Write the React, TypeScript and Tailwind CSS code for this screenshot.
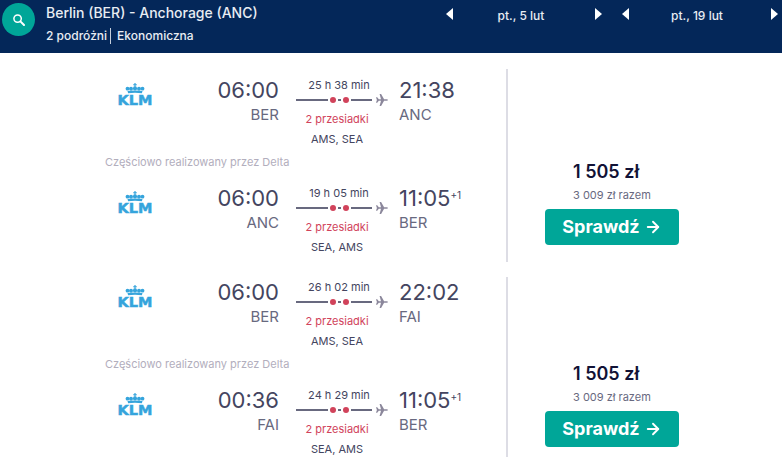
import { ArrowRight } from "lucide-react";

type Leg = {
  departTime: string;
  from: string;
  duration: string;
  via: string;
  arriveTime: string;
  to: string;
  nextDay?: boolean;
};

type Offer = {
  id: number;
  outbound: Leg;
  inbound: Leg;
};

const offers: Offer[] = [
  {
    id: 1,
    outbound: { departTime: "06:00", from: "BER", duration: "25 h 38 min", via: "AMS, SEA", arriveTime: "21:38", to: "ANC" },
    inbound: { departTime: "06:00", from: "ANC", duration: "19 h 05 min", via: "SEA, AMS", arriveTime: "11:05", to: "BER", nextDay: true },
  },
  {
    id: 2,
    outbound: { departTime: "06:00", from: "BER", duration: "26 h 02 min", via: "AMS, SEA", arriveTime: "22:02", to: "FAI" },
    inbound: { departTime: "00:36", from: "FAI", duration: "24 h 29 min", via: "SEA, AMS", arriveTime: "11:05", to: "BER", nextDay: true },
  },
];

const KlmLogo = () => (
  <svg viewBox="0 0 38 24" className="h-6 w-[38px] shrink-0 fill-[#35a4dc]" role="img" aria-label="KLM">
    <path d="M18.4 0h1.2v1.2h1.2v1.1h-1.2v1.5h-1.2V2.3h-1.2V1.2h1.2z" />
    <circle cx="19" cy="5.4" r="2.1" />
    <circle cx="15" cy="5.7" r="2" />
    <circle cx="23" cy="5.7" r="2" />
    <circle cx="11.5" cy="5.7" r="1.9" />
    <circle cx="26.5" cy="5.7" r="1.9" />
    <path d="M11.500 8.100q7.500-1.200 15 0l-.6 2.100q-6.900-1.100-13.800 0z" />
    <text x="19" y="22" textAnchor="middle" fontFamily="DejaVu Sans, sans-serif" fontWeight="700" fontSize="14.500" stroke="#35a4dc" strokeWidth="0.500">
      KLM
    </text>
  </svg>
);

const PlaneIcon = () => (
  <svg viewBox="0 0 12 12" className="size-3 shrink-0 fill-[#8b879b]" aria-hidden="true">
    <path d="M0 3.300h1.200L2.800 5.200H5L3.600 0h1.500l3 5.200h2.500Q12 5.300 12 6t-1.400.8H8.100l-3 5.200H3.600L5 6.800H2.800L1.200 8.700H0L.9 6z" />
  </svg>
);

const StopsLine = () => (
  <div className="flex h-3 items-center gap-0.5">
    <span className="h-0.5 flex-1 bg-[#68697f]" />
    <span className="size-1.5 rounded-full bg-[#d1435b]" />
    <span className="h-0.5 w-[3px] bg-[#68697f]" />
    <span className="size-1.5 rounded-full bg-[#d1435b]" />
    <span className="mr-0.5 h-0.5 w-[21px] bg-[#68697f]" />
    <PlaneIcon />
  </div>
);

const LegRow = ({ leg }: { leg: Leg }) => (
  <div className="flex items-start">
    <div className="pt-1.5 pl-[11px]">
      <KlmLogo />
    </div>
    <div className="flex-1 text-right">
      <p className="pb-0.5 text-[22px] leading-[26px]">{leg.departTime}</p>
      <p className="text-[15px] leading-5 text-[#68697f]">{leg.from}</p>
    </div>
    <div className="ml-[17px] w-[92px]">
      <p className="pr-1.5 text-center text-[11px] leading-[17px]">{leg.duration}</p>
      <StopsLine />
      <div className="pt-[3px] pr-2.5 text-center text-[11px]">
        <p className="leading-5 text-[#d1435b]">2 przesiadki</p>
        <p className="pt-0.5 leading-4">{leg.via}</p>
      </div>
    </div>
    <div className="w-[118px] pl-[11px]">
      <p className="flex items-start pb-0.5 text-[22px] leading-[26px]">
        {leg.arriveTime}
        {leg.nextDay && <sup className="top-0 text-[10px] leading-5">+1</sup>}
      </p>
      <p className="text-[15px] leading-5 text-[#68697f]">{leg.to}</p>
    </div>
  </div>
);

const OfferCard = ({ offer }: { offer: Offer }) => (
  <article className="group flex">
    <div className="flex-1 border-r-2 border-[#dddde5] pt-0.5 pl-[105px] group-first:pt-2 group-first:pb-[7px]">
      <LegRow leg={offer.outbound} />
      <p className="pt-1 pb-3 text-[11px] leading-[22px] text-[#b2aebd]">Częściowo realizowany przez Delta</p>
      <LegRow leg={offer.inbound} />
    </div>
    <div className="flex w-[274px] flex-col justify-end pb-2.5 pl-[37px] group-first:pb-[17px]">
      <p className="pl-7 text-lg leading-6 font-semibold text-[#111236]">1 505 zł</p>
      <p className="pt-[3px] pb-1.5 pl-7 text-[11px] leading-4 text-[#68697f]">3 009 zł razem</p>
      <button type="button" className="flex h-9 w-[134px] items-center justify-center gap-1 rounded bg-[#00a698] text-lg font-bold text-white">
        Sprawdź
        <ArrowRight className="size-[18px]" strokeWidth={2.5} />
      </button>
    </div>
  </article>
);

const DateNav = ({ label }: { label: string }) => (
  <div className="flex w-[156px] items-start justify-between">
    <button type="button" aria-label="Poprzedni dzień" className="flex h-5 items-center">
      <svg viewBox="0 0 7 12" className="h-3 w-[7px] fill-white">
        <path d="M7 0v12L0 6z" />
      </svg>
    </button>
    <span className="pt-0.5 pr-1.5 text-xs leading-5 font-medium">{label}</span>
    <button type="button" aria-label="Następny dzień" className="flex h-5 items-center">
      <svg viewBox="0 0 7 12" className="h-3 w-[7px] fill-white">
        <path d="M0 0v12l7-6z" />
      </svg>
    </button>
  </div>
);

const SearchHeader = () => (
  <header className="flex h-[53px] items-start bg-[#042759] pr-1 pl-0.5 text-[#e9edf3]">
    <button type="button" aria-label="Szukaj" className="mt-[3px] flex size-[33px] items-center justify-center rounded-full bg-[#00a698]">
      <svg viewBox="0 0 12 12" className="size-3 fill-none stroke-white" strokeWidth="1.500" strokeLinecap="round">
        <circle cx="4.600" cy="4.600" r="3.700" />
        <path d="M7.400 7.400 11 11" strokeWidth="2" />
      </svg>
    </button>
    <div className="flex-1 pt-0.5 pl-[11px]">
      <h1 className="text-sm leading-[22px] font-medium">Berlin (BER) - Anchorage (ANC)</h1>
      <p className="flex items-center pt-0.5 text-xs leading-5 font-medium">
        <span className="border-r border-[#c5cedb] pr-[3px] leading-4">2 podróżni</span>
        <span className="pl-1.5">Ekonomiczna</span>
      </p>
    </div>
    <div className="flex gap-5 pt-1">
      <DateNav label="pt., 5 lut" />
      <DateNav label="pt., 19 lut" />
    </div>
  </header>
);

const App = () => (
  <div className="min-h-screen bg-white font-['Inter',sans-serif] text-[#444560]">
    <SearchHeader />
    <main className="flex flex-col gap-[15px] pt-4">
      {offers.map((offer) => (
        <OfferCard key={offer.id} offer={offer} />
      ))}
    </main>
  </div>
);

export default App;
